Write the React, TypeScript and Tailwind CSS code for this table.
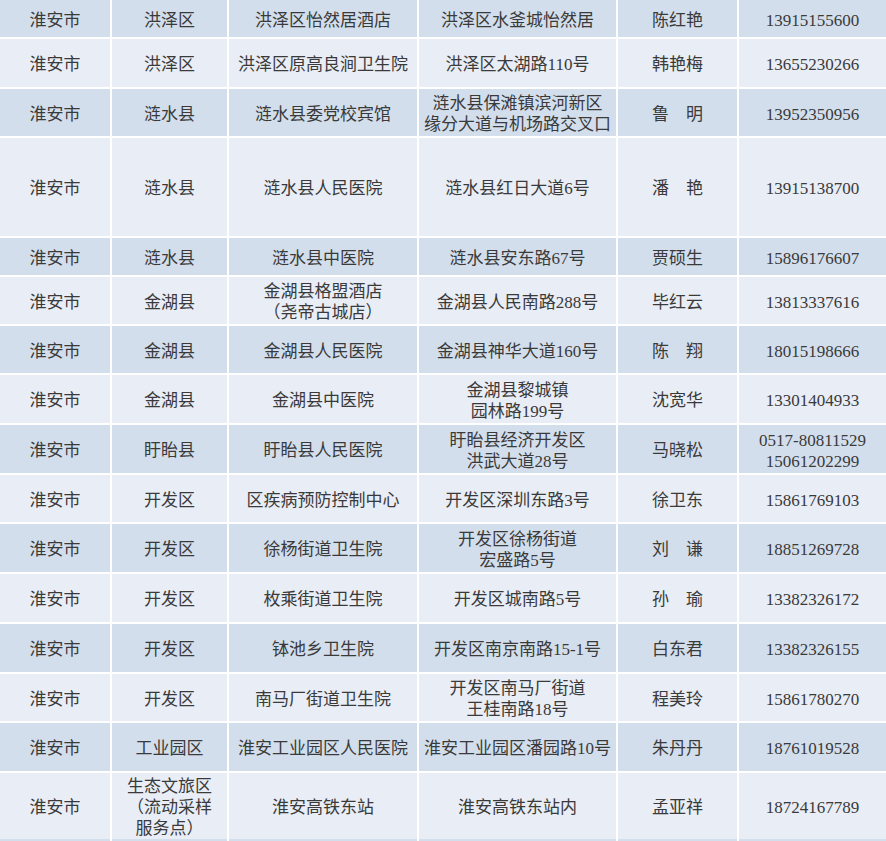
import React from "react";

type Row = { h: string; dark: boolean; c: string[][] };

const rows: Row[] = [
  { h: "h-[37px]", dark: true, c: [["淮安市"], ["洪泽区"], ["洪泽区怡然居酒店"], ["洪泽区水釜城怡然居"], ["陈红艳"], ["13915155600"]] },
  { h: "h-[48px]", dark: false, c: [["淮安市"], ["洪泽区"], ["洪泽区原高良涧卫生院"], ["洪泽区太湖路110号"], ["韩艳梅"], ["13655230266"]] },
  { h: "h-[47px]", dark: true, c: [["淮安市"], ["涟水县"], ["涟水县委党校宾馆"], ["涟水县保滩镇滨河新区", "缘分大道与机场路交叉口"], ["鲁　明"], ["13952350956"]] },
  { h: "h-[98px]", dark: false, c: [["淮安市"], ["涟水县"], ["涟水县人民医院"], ["涟水县红日大道6号"], ["潘　艳"], ["13915138700"]] },
  { h: "h-[37px]", dark: true, c: [["淮安市"], ["涟水县"], ["涟水县中医院"], ["涟水县安东路67号"], ["贾硕生"], ["15896176607"]] },
  { h: "h-[47px]", dark: false, c: [["淮安市"], ["金湖县"], ["金湖县格盟酒店", "（尧帝古城店）"], ["金湖县人民南路288号"], ["毕红云"], ["13813337616"]] },
  { h: "h-[47px]", dark: true, c: [["淮安市"], ["金湖县"], ["金湖县人民医院"], ["金湖县神华大道160号"], ["陈　翔"], ["18015198666"]] },
  { h: "h-[48px]", dark: false, c: [["淮安市"], ["金湖县"], ["金湖县中医院"], ["金湖县黎城镇", "园林路199号"], ["沈宽华"], ["13301404933"]] },
  { h: "h-[48px]", dark: true, c: [["淮安市"], ["盱眙县"], ["盱眙县人民医院"], ["盱眙县经济开发区", "洪武大道28号"], ["马晓松"], ["0517-80811529", "15061202299"]] },
  { h: "h-[47px]", dark: false, c: [["淮安市"], ["开发区"], ["区疾病预防控制中心"], ["开发区深圳东路3号"], ["徐卫东"], ["15861769103"]] },
  { h: "h-[48px]", dark: true, c: [["淮安市"], ["开发区"], ["徐杨街道卫生院"], ["开发区徐杨街道", "宏盛路5号"], ["刘　谦"], ["18851269728"]] },
  { h: "h-[48px]", dark: false, c: [["淮安市"], ["开发区"], ["枚乘街道卫生院"], ["开发区城南路5号"], ["孙　瑜"], ["13382326172"]] },
  { h: "h-[48px]", dark: true, c: [["淮安市"], ["开发区"], ["钵池乡卫生院"], ["开发区南京南路15-1号"], ["白东君"], ["13382326155"]] },
  { h: "h-[47px]", dark: false, c: [["淮安市"], ["开发区"], ["南马厂街道卫生院"], ["开发区南马厂街道", "王桂南路18号"], ["程美玲"], ["15861780270"]] },
  { h: "h-[48px]", dark: true, c: [["淮安市"], ["工业园区"], ["淮安工业园区人民医院"], ["淮安工业园区潘园路10号"], ["朱丹丹"], ["18761019528"]] },
  { h: "h-[64px]", dark: false, c: [["淮安市"], ["生态文旅区", "（流动采样", "服务点）"], ["淮安高铁东站"], ["淮安高铁东站内"], ["孟亚祥"], ["18724167789"]] },
  { h: "h-[20px]", dark: true, c: [[""], [""], [""], [""], [""], [""]] },
];

export default function App() {
  return (
    <div
      className="w-[886px] h-[841px] overflow-hidden bg-white flex flex-col gap-[2px] text-[#3a3a3a] text-[17px] leading-[21px]"
      style={{ fontFamily: '"Liberation Serif", "Noto Sans CJK SC", serif' }}
    >
      {rows.map((r, i) => (
        <div
          key={i}
          className={`grid grid-cols-[110px_115px_188px_197px_119px_147px] gap-x-[2px] shrink-0 ${r.h}`}
        >
          {r.c.map((cell, j) => (
            <div
              key={j}
              className={`flex flex-col items-center justify-center pt-[3px] text-center whitespace-nowrap ${
                r.dark ? "bg-[#d3deec]" : "bg-[#e9edf5]"
              }`}
            >
              {cell.map((line, k) => (
                <span key={k}>{line}</span>
              ))}
            </div>
          ))}
        </div>
      ))}
    </div>
  );
}
